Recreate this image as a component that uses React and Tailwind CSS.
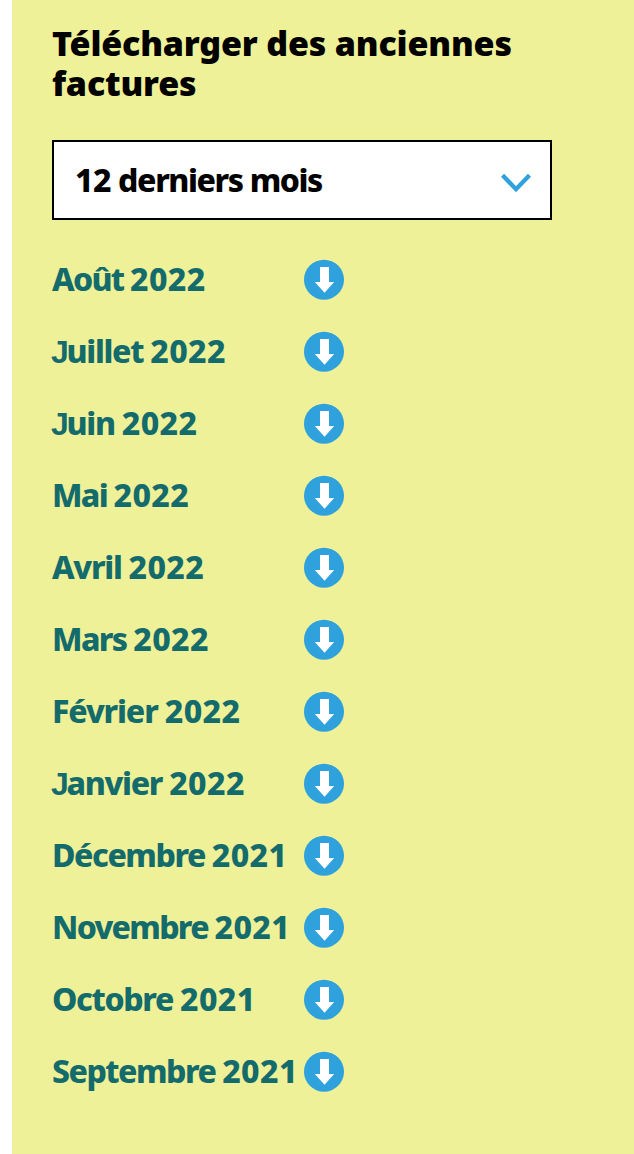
const invoices = [
  { month: 'Août', year: '2022', tracking: 'tracking-[-1.7px]' },
  { month: 'Juillet', year: '2022', tracking: 'tracking-[-1.3px]' },
  { month: 'Juin', year: '2022', tracking: 'tracking-[-1.3px]' },
  { month: 'Mai', year: '2022', tracking: 'tracking-[-1.7px]' },
  { month: 'Avril', year: '2022', tracking: 'tracking-[-1.3px]' },
  { month: 'Mars', year: '2022', tracking: 'tracking-[-1.6px]' },
  { month: 'Février', year: '2022', tracking: 'tracking-[-1.15px]' },
  { month: 'Janvier', year: '2022', tracking: 'tracking-[-1.3px]' },
  { month: 'Décembre', year: '2021', tracking: 'tracking-[-1.45px]' },
  { month: 'Novembre', year: '2021', tracking: 'tracking-[-1.7px]' },
  { month: 'Octobre', year: '2021', tracking: 'tracking-[-1.35px]' },
  { month: 'Septembre', year: '2021', tracking: 'tracking-[-1.5px]' },
]

export default function App() {
  return (
    <div className="min-h-screen bg-white pl-3 font-['Noto_Sans','Open_Sans',sans-serif]">
      <main className="h-[1154px] overflow-hidden bg-[#eff198] px-10 pt-[23px]">
        <h1 className="whitespace-nowrap text-[34px] leading-10 font-black tracking-[-0.17px] text-black">
          Télécharger des anciennes
          <br />
          factures
        </h1>

        <button
          type="button"
          className="mt-[37px] flex h-20 w-[500px] items-center justify-between border-2 border-black bg-white pr-[19px] pl-[21px]"
        >
          <span className="text-[32px] leading-10 font-extrabold tracking-[-1.4px] text-black">
            <span className="tracking-[-0.4px]">12</span> derniers mois
          </span>
          <ChevronIcon />
        </button>

        <ul className="mt-[39px] flex flex-col gap-8">
          {invoices.map(({ month, year, tracking }) => (
            <li key={`${month}-${year}`} className="flex h-10 items-center">
              <a
                href="#"
                className={`w-[252px] shrink-0 whitespace-nowrap text-[32px] leading-10 font-extrabold text-[#146b6b] ${tracking} ${month.startsWith('J') ? "first-letter:-ml-px first-letter:-mr-px first-letter:font-['Liberation_Sans']" : ''}`}
              >
                {month} <span className="tracking-[0.4px]">{year}</span>
              </a>
              <DownloadIcon />
            </li>
          ))}
        </ul>
      </main>
    </div>
  )
}

function ChevronIcon() {
  return (
    <svg className="mt-1.5 h-5 w-[30px]" viewBox="0 0 30 20" fill="none">
      <path d="M1.5 2.2 L15 16.2 L28.5 2.2" stroke="#2fa2dd" strokeWidth="4.4" />
    </svg>
  )
}

function DownloadIcon() {
  return (
    <svg className="mt-px size-10 shrink-0 overflow-visible" viewBox="0 0 40 40">
      <circle cx="20" cy="19.7" r="20" fill="#2fa2dd" />
      <path d="M16 7H25V22H30.2L20.5 32.7L10.8 22H16Z" fill="#fff" />
    </svg>
  )
}
